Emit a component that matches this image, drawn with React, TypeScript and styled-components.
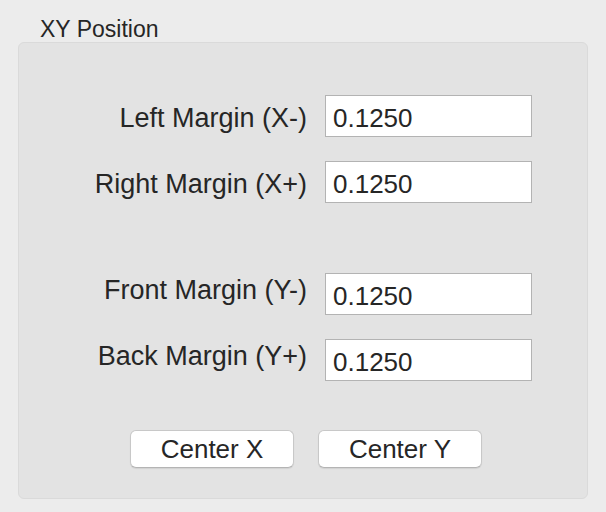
import styled, { createGlobalStyle } from "styled-components";

const GlobalStyle = createGlobalStyle`
  html, body {
    margin: 0;
    padding: 0;
    background: #ececec;
  }
  body {
    font-family: "Liberation Sans", Arial, sans-serif;
    color: #262626;
  }
`;

const Page = styled.div`
  width: 606px;
  height: 512px;
  padding-top: 16px;
  box-sizing: border-box;
  background: #ececec;
`;

const Title = styled.div`
  padding-left: 40px;
  font-size: 23px;
  line-height: 26px;
`;

const GroupBox = styled.div`
  margin-left: 18px;
  width: 570px;
  box-sizing: border-box;
  border: 1px solid #dadada;
  border-radius: 6px;
  background: #e3e3e3;
  padding: 52px 0 30px 0;
`;

const Form = styled.div`
  display: flex;
  flex-direction: column;
  gap: 24px;
`;

const Row = styled.div<{ $gapAbove?: number; $labelLift?: number }>`
  display: grid;
  grid-template-columns: 288px 207px;
  column-gap: 18px;
  align-items: center;
  margin-top: ${(p) => p.$gapAbove || 0}px;

  label {
    justify-self: end;
    font-size: 27px;
    line-height: 32px;
    white-space: nowrap;
    padding-bottom: ${(p) => (p.$labelLift || 0) * 2}px;
    padding-top: ${(p) => (p.$labelLift ? 0 : 4)}px;
  }
`;

const NumberField = styled.input`
  width: 207px;
  height: 42px;
  box-sizing: border-box;
  border: 1px solid #b3b3b3;
  background: #fff;
  padding: 4px 0 0 7px;
  margin: 0;
  font-family: "Liberation Sans", Arial, sans-serif;
  font-size: 26px;
  color: #262626;
  outline: none;
  border-radius: 0;
`;

const ButtonBar = styled.div`
  display: flex;
  gap: 24px;
  padding-left: 111px;
  margin-top: 49px;
`;

const PushButton = styled.button`
  width: 164px;
  height: 38px;
  box-sizing: border-box;
  background: #fff;
  border: 1px solid #c8c8c8;
  border-bottom-color: #b4b4b4;
  border-radius: 6px;
  box-shadow: 0 1px 1px rgba(0, 0, 0, 0.08);
  font-family: "Liberation Sans", Arial, sans-serif;
  font-size: 26px;
  color: #262626;
  padding: 0;
  line-height: 36px;
`;

const fields = [
  { label: "Left Margin (X-)", gap: 0, lift: 0 },
  { label: "Right Margin (X+)", gap: 0, lift: 0 },
  { label: "Front Margin (Y-)", gap: 46, lift: 4 },
  { label: "Back Margin (Y+)", gap: 0, lift: 4 },
];

export default function App() {
  return (
    <>
      <GlobalStyle />
      <Page>
        <Title>XY Position</Title>
        <GroupBox>
          <Form>
            {fields.map((f) => (
              <Row key={f.label} $gapAbove={f.gap} $labelLift={f.lift}>
                <label>{f.label}</label>
                <NumberField defaultValue="0.1250" />
              </Row>
            ))}
          </Form>
          <ButtonBar>
            <PushButton>Center X</PushButton>
            <PushButton>Center Y</PushButton>
          </ButtonBar>
        </GroupBox>
      </Page>
    </>
  );
}
